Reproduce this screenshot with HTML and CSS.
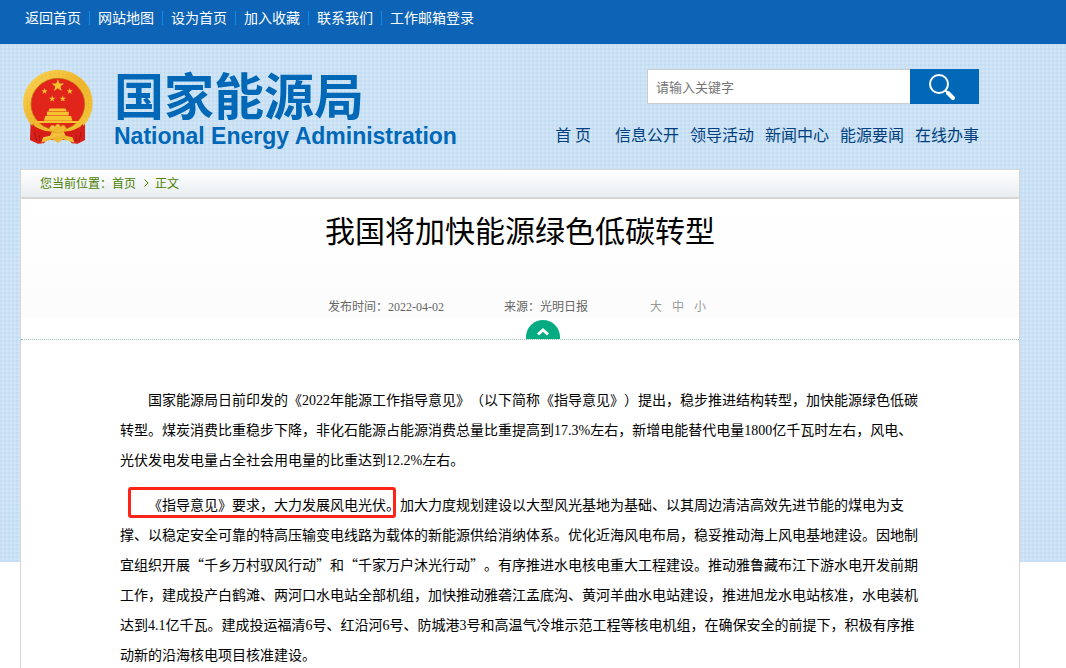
FILE: index.html
```
<!DOCTYPE html>
<html lang="zh-CN">
<head>
    <meta charset="UTF-8">
    <meta name="viewport" content="width=device-width, initial-scale=1.0">
    <title>我国将加快能源绿色低碳转型 - 国家能源局</title>
    <link rel="stylesheet" href="styles.css">
</head>
<body>
    <!-- 顶部链接 -->
    <nav class="top-bar">
        <a href="#">返回首页</a>
        <a href="#">网站地图</a>
        <a href="#">设为首页</a>
        <a href="#">加入收藏</a>
        <a href="#">联系我们</a>
        <a href="#">工作邮箱登录</a>
    </nav>

    <div class="page">
        <header class="header">
            <a href="#" class="brand">
                <svg class="emblem" viewBox="36 26 214 226" aria-hidden="true">
                    <defs>
                        <linearGradient id="gold" x1="0" y1="0" x2="1" y2="1">
                            <stop offset="0" stop-color="#fbd85a"/>
                            <stop offset="0.5" stop-color="#eeb52c"/>
                            <stop offset="1" stop-color="#f6c83c"/>
                        </linearGradient>
                    </defs>
                    <path fill="#d8201a" d="M62 184L92 200L144 206L196 200L226 184L226 240L204 251L186 250L178 240L110 240L102 250L84 251L60 240Z"/>
                    <ellipse cx="144" cy="129" rx="105" ry="101" fill="url(#gold)"/>
                    <ellipse cx="144" cy="128" rx="93" ry="89" fill="none" stroke="#e2aa2c" stroke-width="2" stroke-dasharray="5 8"/>
                    <ellipse cx="144" cy="132" rx="81" ry="78" fill="#e1251b" stroke="#b97416" stroke-width="2"/>
                    <g fill="#f4c32f">
                        <path id="star" d="M144 56l4.700 13.500 14.300.3-11.400 8.700 4.200 13.700-11.800-8.200-11.800 8.200 4.200-13.700-11.400-8.700 14.300-.3z"/>
                        <use href="#star" transform="translate(32 55) scale(.5)"/>
                        <use href="#star" transform="translate(108 55) scale(.5)"/>
                        <use href="#star" transform="translate(55 78) scale(.5)"/>
                        <use href="#star" transform="translate(87 78) scale(.5)"/>
                        <path d="M119 145h48l4 8h-56zM111 155h66v11h-66zM106 168h78l4 14h-86zM74 183h140l-5 6H79z"/>
                    </g>
                    <path fill="#d61e18" d="M68 192Q96 216 126 214L118 234Q84 230 66 206ZM220 192Q192 216 162 214L170 234Q204 230 222 206Z"/>
                    <path fill="none" stroke="#f1bb2e" stroke-width="5" d="M74 196Q98 211 124 211M214 196Q190 211 164 211M98 241Q116 236 126 226M190 241Q172 236 162 226"/>
                    <path fill="url(#gold)" stroke="#d99c20" stroke-width="2" d="M119 204Q126 190 135 200Q144 184 153 200Q162 190 169 204Q166 217 144 219Q122 217 119 204Z"/>
                    <path fill="url(#gold)" d="M128 226Q144 214 160 226L188 232L194 248L160 238L144 249L128 238L94 248L100 232Z"/>
                    <path stroke="#a91510" stroke-width="3" fill="none" d="M74 216L80 244M88 224L90 246M214 216L208 244M200 224L198 246"/>
                </svg>
                <span class="brand-text">
                    <span class="brand-cn">国家能源局</span>
                    <span class="brand-en">National Energy Administration</span>
                </span>
            </a>

            <div class="header-right">
                <form class="search">
                    <input type="text" class="search-input" placeholder="请输入关键字" aria-label="请输入关键字">
                    <button type="button" class="search-btn" aria-label="搜索">
                        <svg viewBox="0 0 28 28" width="28" height="28" fill="none" stroke="#fff" stroke-linecap="round">
                            <circle cx="11" cy="11" r="9" stroke-width="2"/>
                            <path d="M17.500 17.500L20 20" stroke-width="2"/>
                            <path d="M20 20L25 25" stroke-width="4"/>
                        </svg>
                    </button>
                </form>
                <nav class="main-nav">
                    <a href="#" class="home">首 页</a>
                    <a href="#">信息公开</a>
                    <a href="#">领导活动</a>
                    <a href="#">新闻中心</a>
                    <a href="#">能源要闻</a>
                    <a href="#">在线办事</a>
                </nav>
            </div>
        </header>

        <main class="content">
            <div class="breadcrumb">
                <span>您当前位置：</span><a href="#">首页</a>
                <svg viewBox="0 0 5 8" width="5" height="8" fill="none" stroke="#4a7f00"><path d="M.5.5L4 4L.5 7.500"/></svg>
                <a href="#">正文</a>
            </div>

            <div class="article-head">
                <h1>我国将加快能源绿色低碳转型</h1>
                <div class="meta">
                    <span class="date">发布时间：2022-04-02</span>
                    <span>来源：光明日报</span>
                    <span class="font-size">
                        <button type="button">大</button>
                        <button type="button">中</button>
                        <button type="button">小</button>
                    </span>
                </div>
                <button type="button" class="fold-btn" aria-label="收起">
                    <svg viewBox="0 0 12 9" width="12" height="9" fill="none" stroke="#fff" stroke-width="3"><path d="M1 7.500L6 3L11 7.500"/></svg>
                </button>
            </div>

            <!-- 正文 -->
            <article class="article">
                <p>国家能源局日前印发的《2022年能源工作指导意见》（以下简称《指导意见》）提出，稳步推进结构转型，加快能源绿色低碳转型。煤炭消费比重稳步下降，非化石能源占能源消费总量比重提高到17.3%左右，新增电能替代电量1800亿千瓦时左右，风电、光伏发电发电量占全社会用电量的比重达到12.2%左右。</p>
                <p><span class="highlight">《指导意见》要求，大力发展风电光伏。</span>加大力度规划建设以大型风光基地为基础、以其周边清洁高效先进节能的煤电为支撑、以稳定安全可靠的特高压输变电线路为载体的新能源供给消纳体系。优化近海风电布局，稳妥推动海上风电基地建设。因地制宜组织开展<span class="quote">“</span>千乡万村驭风行动<span class="quote">”</span>和<span class="quote">“</span>千家万户沐光行动<span class="quote">”</span>。有序推进水电核电重大工程建设。推动雅鲁藏布江下游水电开发前期工作，建成投产白鹤滩、两河口水电站全部机组，加快推动雅砻江孟底沟、黄河羊曲水电站建设，推进旭龙水电站核准，水电装机达到4.1亿千瓦。建成投运福清6号、红沿河6号、防城港3号和高温气冷堆示范工程等核电机组，在确保安全的前提下，积极有序推动新的沿海核电项目核准建设。</p>
            </article>
        </main>
    </div>
</body>
</html>
```
FILE: styles.css
```
* {
    margin: 0;
    padding: 0;
    box-sizing: border-box;
}

body {
    font-family: "Liberation Serif", "Noto Sans CJK SC", sans-serif;
    font-size: 14px;
    color: #000;
    background: #fff;
    text-spacing-trim: space-all;
}

a {
    color: inherit;
    text-decoration: none;
}

button {
    border: none;
    background: none;
    font: inherit;
    color: inherit;
    cursor: pointer;
}

/* 顶部链接 */
.top-bar {
    display: flex;
    height: 44px;
    padding: 11px 17px;
    background: #0d64b7;
    color: #fff;
    line-height: 16px;
}

.top-bar a {
    height: 14px;
    padding: 0 8px;
}

.top-bar a + a {
    border-left: 1px solid #0c8be8;
}

/* 网格背景 */
.page {
    background-image:
        repeating-linear-gradient(90deg, rgba(150, 190, 225, 0.12) 0 2px, transparent 2px 4px),
        repeating-linear-gradient(rgba(150, 190, 225, 0.12) 0 2px, transparent 2px 4px),
        linear-gradient(#d2e6f7, #d2e6f7);
    background-size: 100% 518px;
    background-repeat: no-repeat;
}

/* 头部 */
.header {
    display: flex;
    justify-content: space-between;
    height: 125px;
    padding: 25px 87px 0 22px;
}

.brand {
    display: flex;
    gap: 21px;
    color: #0068b7;
}

.emblem {
    width: 71px;
    height: 75px;
}

.brand-text {
    display: flex;
    flex-direction: column;
    white-space: nowrap;
}

.brand-cn {
    height: 54px;
    font: bold 50px/48px "Noto Sans CJK SC", sans-serif;
}

.brand-en {
    font: bold 23px/26px "Liberation Sans", sans-serif;
}

.header-right {
    display: flex;
    flex-direction: column;
    align-items: flex-end;
    gap: 18px;
}

.search {
    display: flex;
    width: 332px;
    height: 35px;
}

.search-input {
    flex: 1;
    min-width: 0;
    padding: 0 8px;
    border: 1px solid #ccc;
    border-right: none;
    background: #fff;
    font: 13px "Noto Sans CJK SC", sans-serif;
}

.search-input::placeholder {
    color: #757575;
}

.search-btn {
    display: flex;
    align-items: center;
    justify-content: center;
    width: 69px;
    padding-right: 6px;
    background: #0068b7;
}

.main-nav {
    display: flex;
    gap: 11px;
    font: 16px/24px "Noto Sans CJK SC", sans-serif;
    color: #003f7d;
    white-space: nowrap;
}

.main-nav .home {
    margin-right: 13px;
}

/* 内容区 */
.content {
    margin: 0 46px 0 20px;
    border: 1px solid #d6d6d6;
    border-bottom: none;
    background: #fff;
}

.breadcrumb {
    display: flex;
    align-items: center;
    height: 29px;
    padding: 0 19px 2px;
    border-bottom: 2px solid #d6d6d6;
    background: linear-gradient(#fff, #e8edf1);
    font-size: 12px;
    color: #4a7f00;
}

.breadcrumb svg {
    margin: 0 6px 0 8px;
}

.article-head {
    display: flex;
    flex-direction: column;
    align-items: center;
    border-bottom: 1px dotted #8fc4b4;
    background: linear-gradient(#fff, #fcfcfc 118px, #fff 119px);
}

.article-head h1 {
    padding-top: 8px;
    font: 30px/44px "Noto Sans CJK SC", sans-serif;
}

.meta {
    display: flex;
    gap: 56px;
    padding: 47px 6px 0 0;
    font-size: 12px;
    line-height: 18px;
    color: #666;
}

.date {
    min-width: 120px;
}

.font-size {
    display: flex;
    gap: 10px;
    padding-left: 6px;
    color: #999;
}

.fold-btn {
    display: flex;
    align-items: center;
    justify-content: center;
    width: 34px;
    height: 19px;
    margin: 4px 0 0 46px;
    padding-top: 3px;
    border-radius: 17px 17px 0 0;
    background: #06ab82;
}

/* 正文 */
.article {
    padding: 46px 99px 0;
    line-height: 30px;
}

.article p {
    margin-bottom: 15px;
    text-indent: 2em;
}

/* 全角引号 */
.quote {
    font-family: "Noto Sans CJK SC", sans-serif;
    line-height: 1;
}

/* 重点内容红框 */
.highlight {
    display: inline-block;
    position: relative;
    text-indent: 0;
}

.highlight::after {
    content: "";
    position: absolute;
    inset: -4px 4px 3px -20px;
    border: 3px solid #fe2418;
    border-radius: 3px;
}
```
